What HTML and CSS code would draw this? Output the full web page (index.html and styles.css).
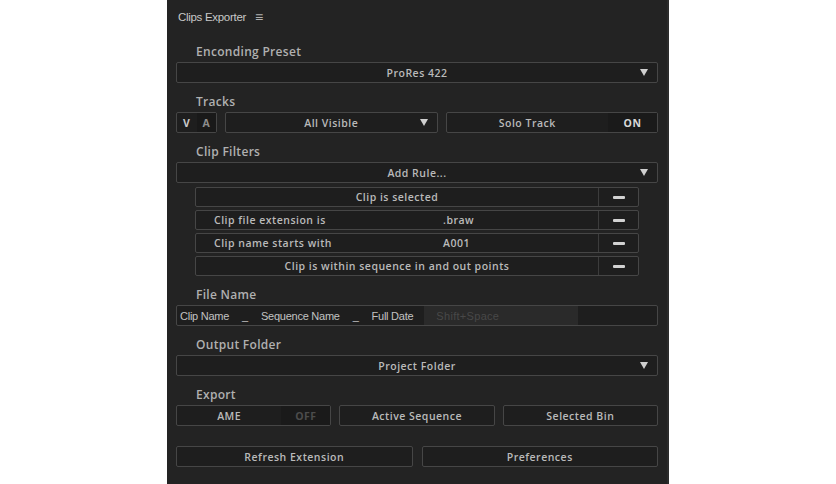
FILE: index.html
```html
<!DOCTYPE html>
<html>
<head>
<meta charset="utf-8">
<link rel="stylesheet" href="styles.css">
</head>
<body>
<div class="panel">
  <div class="header"><span class="title">Clips Exporter</span><span class="menu">&#8801;</span></div>

  <div class="section">
    <div class="label">Enconding Preset</div>
    <div class="box dropdown"><span class="val">ProRes 422</span><svg class="arrow" width="8" height="7" viewBox="0 0 8 7"><polygon points="0,0 8,0 4,7" fill="#cfcfcf"/></svg></div>
  </div>

  <div class="section">
    <div class="label">Tracks</div>
    <div class="tracks">
      <div class="box va"><span class="v">V</span><span class="a">A</span></div>
      <div class="box dropdown"><span class="val">All Visible</span><svg class="arrow" width="8" height="7" viewBox="0 0 8 7"><polygon points="0,0 8,0 4,7" fill="#cfcfcf"/></svg></div>
      <div class="box toggle"><span class="tname">Solo Track</span><span class="tstate on">ON</span></div>
    </div>
  </div>

  <div class="section">
    <div class="label">Clip Filters</div>
    <div class="box dropdown"><span class="val">Add Rule...</span><svg class="arrow" width="8" height="7" viewBox="0 0 8 7"><polygon points="0,0 8,0 4,7" fill="#cfcfcf"/></svg></div>
    <div class="rules">
      <div class="box rule"><span class="rtext center">Clip is selected</span><span class="minus"><i></i></span></div>
      <div class="box rule"><span class="rtext"><span class="rlabel">Clip file extension is</span><span class="rval">.braw</span></span><span class="minus"><i></i></span></div>
      <div class="box rule"><span class="rtext"><span class="rlabel">Clip name starts with</span><span class="rval">A001</span></span><span class="minus"><i></i></span></div>
      <div class="box rule"><span class="rtext center">Clip is within sequence in and out points</span><span class="minus"><i></i></span></div>
    </div>
  </div>

  <div class="section">
    <div class="label">File Name</div>
    <div class="box filename">
      <span class="tok">Clip Name</span><span class="sep">_</span><span class="tok">Sequence Name</span><span class="sep">_</span><span class="tok">Full Date</span><span class="input">Shift+Space</span>
    </div>
  </div>

  <div class="section">
    <div class="label">Output Folder</div>
    <div class="box dropdown"><span class="val">Project Folder</span><svg class="arrow" width="8" height="7" viewBox="0 0 8 7"><polygon points="0,0 8,0 4,7" fill="#cfcfcf"/></svg></div>
  </div>

  <div class="section">
    <div class="label">Export</div>
    <div class="export">
      <div class="box toggle"><span class="tname">AME</span><span class="tstate off">OFF</span></div>
      <div class="box btn">Active Sequence</div>
      <div class="box btn">Selected Bin</div>
    </div>
  </div>

  <div class="bottom">
    <div class="box btn">Refresh Extension</div>
    <div class="box btn">Preferences</div>
  </div>
</div>
</body>
</html>
```

FILE: styles.css
```css
html, body {
  margin: 0;
  padding: 0;
  background: #ffffff;
}
body {
  font-family: "Open Sans", "Liberation Sans", sans-serif;
}
.panel {
  box-sizing: border-box;
  margin-left: 167px;
  width: 502px;
  height: 484px;
  background: #232323;
  border-right: 2px solid #2c2c2c;
  padding: 0 9px 0 9px;
  color: #b5b5b5;
}
.header {
  height: 33px;
  display: flex;
  align-items: center;
  padding-left: 2px;
  gap: 9px;
  font-family: "Liberation Sans", sans-serif;
  font-size: 11.5px;
  letter-spacing: -0.3px;
  color: #c8c8c8;
}
.menu {
  font-size: 14px;
  color: #b0b0b0;
}
.section {
  margin-top: 9px;
}
.label {
  height: 20px;
  line-height: 20px;
  padding-left: 20px;
  font-size: 12px;
  font-weight: 600;
  color: #b0b0b0;
  letter-spacing: 0.3px;
}
.box {
  box-sizing: border-box;
  height: 21px;
  border: 1px solid #464646;
  border-radius: 2px;
  background: #1e1e1e;
  font-size: 10.5px;
  font-weight: 600;
  letter-spacing: 0.5px;
  color: #bababa;
  display: flex;
  align-items: center;
}
.dropdown {
  position: relative;
  justify-content: center;
}
.arrow {
  position: absolute;
  right: 9px;
  top: 6px;
}
.tracks {
  display: grid;
  grid-template-columns: 41px 1fr 1fr;
  gap: 8px;
}
.va span {
  flex: 1;
  height: 100%;
  display: flex;
  align-items: center;
  justify-content: center;
  font-weight: 700;
}
.va .v { color: #c8c8c8; }
.va .a { background: #191919; color: #8c8c8c; }
.toggle .tname {
  flex: 1;
  text-align: center;
}
.toggle .tstate {
  width: 49px;
  height: 100%;
  display: flex;
  align-items: center;
  justify-content: center;
  background: #1a1a1a;
  font-weight: 700;
}
.tstate.on { color: #d8d8d8; }
.tstate.off { color: #4c4c4c; }
.rules {
  margin: 4px 19px 0 19px;
  display: flex;
  flex-direction: column;
  gap: 3px;
}
.rule {
  height: 20px;
}
.rtext {
  flex: 1;
  display: flex;
  align-items: center;
  height: 100%;
}
.rtext.center {
  justify-content: center;
}
.rlabel {
  width: 247px;
  padding-left: 18px;
  box-sizing: border-box;
}
.minus {
  width: 39px;
  height: 100%;
  border-left: 1px solid #3c3c3c;
  display: flex;
  align-items: center;
  justify-content: center;
}
.minus i {
  display: block;
  width: 12px;
  height: 3px;
  border-radius: 1px;
  background: #d2d2d2;
}
.filename {
  font-family: "Liberation Sans", sans-serif;
  font-weight: 400;
  font-size: 11px;
  letter-spacing: -0.25px;
  color: #c2c2c2;
}
.tok {
  padding: 0 3px;
}
.sep {
  padding: 0 10px;
}
.input {
  margin-left: 8px;
  width: 154px;
  height: 100%;
  background: #2a2a2a;
  color: #484848;
  padding-left: 12px;
  box-sizing: border-box;
  display: flex;
  align-items: center;
  letter-spacing: 0.3px;
}
.export {
  display: grid;
  grid-template-columns: 1fr 1fr 1fr;
  gap: 8px;
}
.btn {
  justify-content: center;
}
.bottom {
  margin-top: 20px;
  display: grid;
  grid-template-columns: 1fr 1fr;
  gap: 9px;
}
```
